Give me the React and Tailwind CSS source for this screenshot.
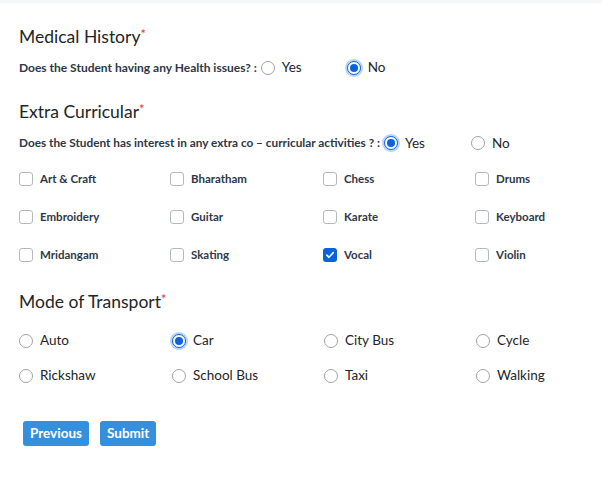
import React from 'react';

const activities = [
  ['Art & Craft', false], ['Bharatham', false], ['Chess', false], ['Drums', false],
  ['Embroidery', false], ['Guitar', false], ['Karate', false], ['Keyboard', false],
  ['Mridangam', false], ['Skating', false], ['Vocal', true], ['Violin', false],
];

const transports = [
  ['Auto', false], ['Car', true], ['City Bus', false], ['Cycle', false],
  ['Rickshaw', false], ['School Bus', false], ['Taxi', false], ['Walking', false],
];

function Radio({ checked }) {
  if (checked) {
    return (
      <span className="w-[14px] h-[14px] rounded-full border-[1.5px] border-[#0b63dc] bg-white flex items-center justify-center ring-2 ring-[#b7d3f7] shrink-0">
        <span className="w-[8px] h-[8px] rounded-full bg-[#0b63dc]" />
      </span>
    );
  }
  return <span className="w-[14px] h-[14px] rounded-full border border-[#9ea3a8] bg-white shrink-0" />;
}

function Checkbox({ checked }) {
  if (checked) {
    return (
      <span className="w-[14px] h-[14px] rounded-[3px] bg-[#0b63dc] flex items-center justify-center shrink-0">
        <svg width="10" height="10" viewBox="0 0 10 10" fill="none">
          <path d="M1.8 5.2 L4 7.3 L8.3 2.6" stroke="white" strokeWidth="1.6" strokeLinecap="round" strokeLinejoin="round" />
        </svg>
      </span>
    );
  }
  return <span className="w-[14px] h-[14px] rounded-[3px] border border-[#b4b9be] bg-white shrink-0" />;
}

function Heading({ children }) {
  return (
    <h2 className="text-[17.5px] leading-none text-[#212529]">
      {children}<span className="text-[#e3342f] text-[13px] align-top">*</span>
    </h2>
  );
}

export default function App() {
  return (
    <div className="w-[602px] h-[479px] bg-white font-['Lato',sans-serif] text-[#212529] overflow-hidden">
      <div className="h-[3px] bg-[#f6f7f8]" />
      <div className="pl-[19px] pt-[25px]">
        {/* Medical History */}
        <Heading>Medical History</Heading>
        <div className="flex items-center mt-[13px] h-[18px]">
          <span className="text-[12px] font-bold text-[#2d3748] mr-[4px]">Does the Student having any Health issues? :</span>
          <Radio />
          <span className="text-[13.5px] ml-[7px] w-[65px]">Yes</span>
          <Radio checked />
          <span className="text-[13.5px] ml-[7px]">No</span>
        </div>

        {/* Extra Curricular */}
        <div className="mt-[26px]">
          <Heading>Extra Curricular</Heading>
        </div>
        <div className="flex items-center mt-[14px] h-[18px]">
          <span className="text-[11.8px] font-bold text-[#2d3748] mr-[4px]">Does the Student has interest in any extra co – curricular activities ? :</span>
          <Radio checked />
          <span className="text-[13.5px] ml-[7px] w-[66px]">Yes</span>
          <Radio />
          <span className="text-[13.5px] ml-[7px]">No</span>
        </div>

        <div className="grid grid-cols-[151px_153px_152px_1fr] gap-y-[20px] mt-[18px]">
          {activities.map(([name, checked]) => (
            <div key={name} className="flex items-center h-[18px]">
              <Checkbox checked={checked} />
              <span className="ml-[7px] text-[11.5px] font-bold text-[#2d3748]">{name}</span>
            </div>
          ))}
        </div>

        {/* Mode of Transport */}
        <div className="mt-[29px]">
          <Heading>Mode of Transport</Heading>
        </div>
        <div className="grid grid-cols-[153px_152px_152px_1fr] gap-y-[17px] mt-[21px]">
          {transports.map(([name, checked]) => (
            <div key={name} className="flex items-center h-[18px]">
              <Radio checked={checked} />
              <span className="ml-[7px] text-[13.5px] text-[#212529]">{name}</span>
            </div>
          ))}
        </div>

        <div className="flex gap-[11px] mt-[36px] ml-[4px]">
          <button className="h-[25px] px-[7px] rounded-[3px] bg-[#3490dc] text-white text-[13.5px] font-bold">Previous</button>
          <button className="h-[25px] px-[7px] rounded-[3px] bg-[#3490dc] text-white text-[13.5px] font-bold">Submit</button>
        </div>
      </div>
    </div>
  );
}
